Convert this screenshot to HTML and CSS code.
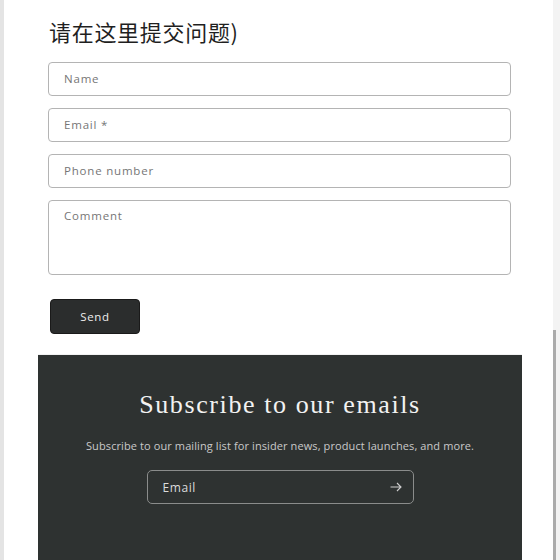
FILE: index.html
```html
<!DOCTYPE html>
<html lang="zh">
<head>
    <meta charset="UTF-8">
    <meta name="viewport" content="width=device-width, initial-scale=1.0">
    <title>Contact</title>
    <link rel="stylesheet" href="styles.css">
</head>
<body>
    <div class="page">
        <main class="contact">
            <h2 class="contact-title">请在这里提交问题)</h2>
            <form class="contact-form">
                <div class="field">Name</div>
                <div class="field">Email *</div>
                <div class="field">Phone number</div>
                <div class="field field-comment">Comment</div>
                <button type="button" class="send-btn">Send</button>
            </form>
        </main>

        <section class="newsletter">
            <h2 class="newsletter-title">Subscribe to our emails</h2>
            <p class="newsletter-text">Subscribe to our mailing list for insider news, product launches, and more.</p>
            <div class="newsletter-field">
                <span>Email</span>
                <svg width="12" height="10" viewBox="0 0 12 10" fill="none" stroke="#cfcfcf" stroke-width="1.1">
                    <path d="M0.5 5H11M7 1l4 4-4 4"/>
                </svg>
            </div>
        </section>

        <div class="scrollbar"><div class="scroll-thumb"></div></div>
    </div>
</body>
</html>
```

FILE: styles.css
```css
html, body {
    margin: 0;
    padding: 0;
    background: #fff;
}
body {
    font-family: "Open Sans", Lato, sans-serif;
    height: 560px;
    overflow: hidden;
}
.page {
    position: relative;
    height: 560px;
    border-left: 4px solid #e4e4e4;
    padding-right: 7px;
    box-sizing: border-box;
    display: flex;
    flex-direction: column;
}
.contact {
    padding: 15px 0 0 44px;
    width: 463px;
}
.contact-title {
    margin: 0 0 14px 1px;
    font-family: "Noto Sans CJK SC", sans-serif;
    font-weight: 400;
    font-size: 22px;
    letter-spacing: 0.7px;
    line-height: 33px;
    color: #1f1f1f;
}
.contact-form {
    display: flex;
    flex-direction: column;
    gap: 12px;
}
.field {
    height: 34px;
    box-sizing: border-box;
    border: 1px solid #b4b4b4;
    border-radius: 4px;
    padding: 0 15px;
    font-size: 11.5px;
    letter-spacing: 0.8px;
    line-height: 32px;
    color: #767676;
}
.field-comment {
    height: 75px;
    line-height: 30px;
}
.send-btn {
    margin: 12px 0 0 2px;
    width: 90px;
    height: 35px;
    background: #2b2d2d;
    border: 1px solid #1a1a1a;
    border-radius: 4px;
    color: #eee;
    font-family: "Open Sans", sans-serif;
    font-size: 11.5px;
    letter-spacing: 0.7px;
}
.newsletter {
    margin: 21px 0 0 34px;
    width: 484px;
    flex: 1;
    background: #2e3231;
    box-shadow: 0 -1px 0 #f2f2f2;
    display: flex;
    flex-direction: column;
    align-items: center;
}
.newsletter-title {
    margin: 35px 0 0;
    font-family: "Liberation Serif", serif;
    font-weight: 400;
    font-size: 26px;
    letter-spacing: 1.6px;
    line-height: 30px;
    color: #f2f2f2;
}
.newsletter-text {
    margin: 18px 0 0;
    font-size: 11px;
    letter-spacing: 0.1px;
    color: #c9c9c9;
}
.newsletter-field {
    margin-top: 17px;
    width: 267px;
    height: 34px;
    box-sizing: border-box;
    border: 1px solid #8a8c8b;
    border-radius: 5px;
    padding: 0 11px 0 15px;
    display: flex;
    align-items: center;
    justify-content: space-between;
    font-size: 12px;
    letter-spacing: 0.6px;
    color: #dcdcdc;
}
.scrollbar {
    position: absolute;
    top: 0;
    right: 0;
    width: 7px;
    height: 560px;
    background: #f3f3f3;
}
.scroll-thumb {
    position: absolute;
    top: 330px;
    left: 0;
    width: 3px;
    height: 230px;
    background: #ababab;
}
```
